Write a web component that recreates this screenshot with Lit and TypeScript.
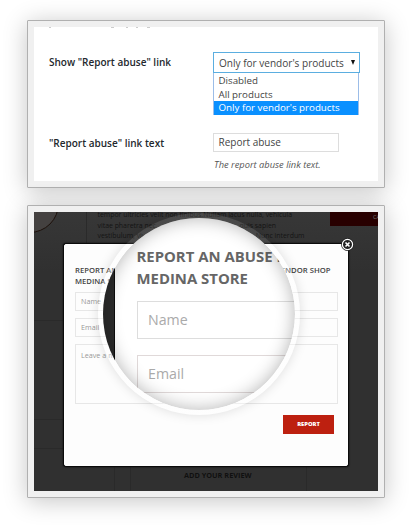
import { LitElement, html, css } from "lit";
import { customElement } from "lit/decorators.js";

@customElement("settings-panel")
class SettingsPanel extends LitElement {
  static styles = css`
    :host { display: block; height: 154px; background: #fff; overflow: hidden; color: #444; font: 10.05px "Open Sans", sans-serif; }
    .edge { height: 1px; margin-left: 15px; width: 110px; background: linear-gradient(#ccc, #ccc) 0 0 / 2px 1px no-repeat, linear-gradient(#ccc, #ccc) 62px 0 / 3px 1px no-repeat, linear-gradient(#ccc, #ccc) 77px 0 / 2px 1px no-repeat, linear-gradient(#ccc, #ccc) 87px 0 / 2px 1px no-repeat, linear-gradient(#ccc, #ccc) 98px 0 / 3px 1px no-repeat; }
    .grid { display: grid; grid-template-columns: 164px 147px; padding: 24px 0 0 15px; }
    .label { font-weight: 600; color: #23282d; font-size: 10px; line-height: 21px; white-space: nowrap; }
    .select { box-sizing: border-box; height: 21px; width: 147px; border: 1px solid #5baee0; display: flex; align-items: center; justify-content: space-between; padding: 0 4px 0 5px; white-space: nowrap; }
    .arrow { width: 0; height: 0; border: 2.3px solid transparent; border-top: 5px solid #111; border-bottom: 0; }
    .list { box-sizing: border-box; width: 146px; height: 42px; border: 1px solid #9cbde8; border-top: 0; line-height: 15px; font-size: 9.75px; }
    .item { padding-left: 4.5px; height: 14px; white-space: nowrap; }
    .on { background: #0a90ff; color: #fff; line-height: 14px; }
    .second { margin-top: 18px; }
    .input { box-sizing: border-box; height: 19px; width: 126px; border: 1px solid #ddd; padding-left: 4.5px; line-height: 17px; font-size: 10px; }
    .hint { font-style: italic; font-size: 9.3px; line-height: 14px; margin-top: 6px; color: #555; white-space: nowrap; padding-left: 1px; }
  `;
  render() {
    return html`
      <div class="edge"></div>
      <div class="grid">
        <div class="label">Show "Report abuse" link</div>
        <div>
          <div class="select"><span>Only for vendor's products</span><i class="arrow"></i></div>
          <div class="list">
            <div class="item">Disabled</div>
            <div class="item">All products</div>
            <div class="item on">Only for vendor's products</div>
          </div>
        </div>
        <div class="label second">"Report abuse" link text</div>
        <div class="second">
          <div class="input">Report abuse</div>
          <div class="hint">The report abuse link text.</div>
        </div>
      </div>`;
  }
}

@customElement("zoom-lens")
class ZoomLens extends LitElement {
  static styles = css`
    :host { display: block; box-sizing: border-box; width: 202px; height: 202px; border-radius: 50%; padding: 5px; background: linear-gradient(rgba(255, 255, 255, .1) 31px, rgba(255, 255, 255, .35) 31px); box-shadow: 0 0 12px rgba(0, 0, 0, .13); }
    .glass { position: relative; height: 192px; border-radius: 50%; overflow: hidden; background: linear-gradient(90deg, #2b2b2b 11px, #0c0c0c 11px 12px, #fff 12px); }
    .page { height: 192px; margin-left: 12px; padding: 28px 0 0 21.5px; box-sizing: border-box; font-family: "Open Sans", sans-serif; }
    .title { font-weight: 700; font-size: 14.9px; line-height: 21.5px; color: #666; white-space: nowrap; }
    .field { box-sizing: border-box; width: 200px; height: 38px; border: 1.5px solid #ddd; padding-left: 10.5px; font-size: 14.2px; line-height: 36px; color: #aaa; }
    .name { margin-top: 12px; }
    .email { margin-top: 16px; border-color: #e0d9d9; }
    .shade { position: absolute; inset: 0; border-radius: 50%; box-shadow: inset 0 0 18px rgba(0, 0, 0, .3); }
  `;
  render() {
    return html`<div class="glass">
      <div class="page">
        <div class="title">REPORT AN ABUSE FOR</div>
        <div class="title">MEDINA STORE</div>
        <div class="field name">Name</div>
        <div class="field email">Email</div>
      </div>
      <div class="shade"></div>
    </div>`;
  }
}

@customElement("report-dialog")
class ReportDialog extends LitElement {
  static styles = css`
    :host { display: block; box-sizing: border-box; width: 284px; height: 222px; background: #fdfdfd; border: 1px solid #fff; border-radius: 2px; box-shadow: 0 0 2px 1px #0008, 0 0 1px 1px #000a; padding: 20px 10px 0; font-family: "Open Sans", sans-serif; position: relative; }
    .title { display: flex; justify-content: space-between; font-size: 7.7px; font-weight: 600; line-height: 10.5px; color: #444; white-space: nowrap; padding-right: 6.5px; }
    .field { box-sizing: border-box; width: 263px; height: 19px; border: 1px solid #e7e7e7; font-size: 7.2px; line-height: 17px; color: #999; padding-left: 5px; margin-bottom: 7px; }
    .first { margin-top: 6px; }
    .area { height: 60px; line-height: 20px; }
    .button { margin: 11px 3px 0 auto; width: 51px; height: 19px; background: #bd2010; color: #fff; font-size: 5.8px; font-weight: 800; line-height: 19px; text-align: center; }
    .close { position: absolute; right: -7px; top: -7px; width: 13px; height: 13px; }
  `;
  render() {
    return html`
      <div class="title"><span>REPORT AN ABUSE</span><span>VENDOR SHOP</span></div>
      <div class="title">MEDINA STORE</div>
      <div class="field first">Name</div>
      <div class="field">Email</div>
      <div class="field area">Leave a message</div>
      <div class="button">REPORT</div>
      <svg class="close" viewBox="0 0 13 13"><circle cx="6.5" cy="6.5" r="6.4" fill="#222"/><circle cx="6.5" cy="6.5" r="5.1" fill="#222" stroke="#fff" stroke-width="1.2"/><path d="M4.5 4.5l4 4m0-4l-4 4" stroke="#fff" stroke-width="1.6"/></svg>`;
  }
}

@customElement("store-preview")
class StorePreview extends LitElement {
  static styles = css`
    :host { display: block; position: relative; height: 279px; overflow: hidden; background: linear-gradient(#373737, #303030 60px); font-family: "Open Sans", sans-serif; }
    .photo { position: absolute; left: -34px; top: -38px; width: 57px; height: 57px; border-radius: 50%; border: 1.5px solid #1d100a; background: #444140; }
    .copy { position: absolute; left: 63.5px; top: -2px; font-size: 6.9px; line-height: 10.5px; color: #141414; white-space: nowrap; }
    .line { display: flex; justify-content: space-between; }
    .l1 { width: 194.5px; } .l2 { width: 178.5px; } .l3 { width: 207px; }
    .cart { position: absolute; left: 296px; top: 0; width: 48px; height: 14px; background: #280000; color: #777; font-size: 5.5px; line-height: 10px; text-indent: 43px; overflow: hidden; }
    .h { position: absolute; height: 1px; background: #2a2a2a; }
    .v { position: absolute; width: 1px; background: #2a2a2a; }
    .h1 { left: 0; width: 29px; top: 108px; } .h2 { left: 0; width: 29px; top: 207px; } .h3 { left: 0; width: 29px; top: 236px; }
    .v1 { left: 52px; top: 0; height: 31px; } .v2 { left: 80px; top: 255px; height: 24px; } .v3 { left: 96px; top: 255px; height: 24px; } .v4 { left: 272px; top: 255px; height: 24px; }
    .review { position: absolute; left: 150px; top: 258px; font-size: 7.3px; line-height: 11px; font-weight: 700; color: #101010; white-space: nowrap; }
    report-dialog { position: absolute; left: 30px; top: 32px; }
    zoom-lens { position: absolute; left: 64px; top: 1px; }
  `;
  render() {
    return html`
      <div class="photo"></div>
      <div class="copy">
        <div class="line l1"><span>tempor ultricies velit non finibus.</span><span>Nullam lacus nulla, vehicula</span></div>
        <div class="line l2"><span>vitae pharetra nec,</span><span>quis sapien</span></div>
        <div class="line l3"><span>vestibulum, vivamus</span><span>Nunc interdum</span></div>
      </div>
      <div class="cart">CART</div>
      <i class="h h1"></i><i class="h h2"></i><i class="h h3"></i>
      <i class="v v1"></i><i class="v v2"></i><i class="v v3"></i><i class="v v4"></i>
      <div class="review">ADD YOUR REVIEW</div>
      <report-dialog></report-dialog>
      <zoom-lens></zoom-lens>`;
  }
}

@customElement("app-root")
class AppRoot extends LitElement {
  static styles = css`
    :host { display: flex; flex-direction: column; gap: 17px; box-sizing: border-box; height: 525px; padding: 20px 24px 0 27px; background: #fff; overflow: hidden; }
    .frame { border: 1px solid #b0b0b0; border-radius: 1px; padding: 6px; background: #f0f0f0; box-shadow: 0 3px 25px rgba(0, 0, 0, .23); }
  `;
  render() {
    return html`
      <div class="frame"><settings-panel></settings-panel></div>
      <div class="frame"><store-preview></store-preview></div>`;
  }
}
